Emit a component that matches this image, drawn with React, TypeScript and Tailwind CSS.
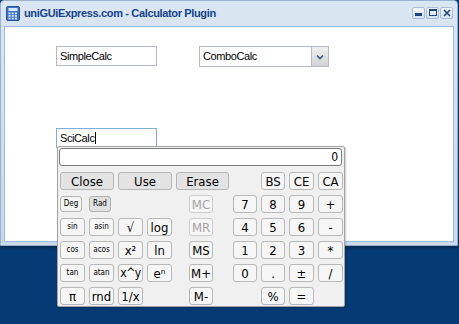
import React from "react";

interface CalcKey {
  label: string;
  cls: string;
  kind?: "wide" | "small" | "off" | "toggle" | "toggleOn" | "tight";
}

const keys: CalcKey[] = [
  { label: "Close", cls: "col-start-1 col-span-2 row-start-1", kind: "wide" },
  { label: "Use", cls: "col-start-3 col-span-2 row-start-1", kind: "wide" },
  { label: "Erase", cls: "col-start-5 col-span-3 row-start-1", kind: "wide" },
  { label: "BS", cls: "col-start-9 row-start-1" },
  { label: "CE", cls: "col-start-10 row-start-1" },
  { label: "CA", cls: "col-start-11 row-start-1" },

  { label: "Deg", cls: "col-start-1 row-start-2", kind: "toggle" },
  { label: "Rad", cls: "col-start-2 row-start-2", kind: "toggleOn" },
  { label: "MC", cls: "col-start-6 row-start-2", kind: "off" },
  { label: "7", cls: "col-start-8 row-start-2" },
  { label: "8", cls: "col-start-9 row-start-2" },
  { label: "9", cls: "col-start-10 row-start-2" },
  { label: "+", cls: "col-start-11 row-start-2" },

  { label: "sin", cls: "col-start-1 row-start-3", kind: "small" },
  { label: "asin", cls: "col-start-2 row-start-3", kind: "small" },
  { label: "√", cls: "col-start-3 row-start-3" },
  { label: "log", cls: "col-start-4 row-start-3" },
  { label: "MR", cls: "col-start-6 row-start-3", kind: "off" },
  { label: "4", cls: "col-start-8 row-start-3" },
  { label: "5", cls: "col-start-9 row-start-3" },
  { label: "6", cls: "col-start-10 row-start-3" },
  { label: "-", cls: "col-start-11 row-start-3" },

  { label: "cos", cls: "col-start-1 row-start-4", kind: "small" },
  { label: "acos", cls: "col-start-2 row-start-4", kind: "small" },
  { label: "x²", cls: "col-start-3 row-start-4" },
  { label: "ln", cls: "col-start-4 row-start-4" },
  { label: "MS", cls: "col-start-6 row-start-4" },
  { label: "1", cls: "col-start-8 row-start-4" },
  { label: "2", cls: "col-start-9 row-start-4" },
  { label: "3", cls: "col-start-10 row-start-4" },
  { label: "*", cls: "col-start-11 row-start-4" },

  { label: "tan", cls: "col-start-1 row-start-5", kind: "small" },
  { label: "atan", cls: "col-start-2 row-start-5", kind: "small" },
  { label: "x^y", cls: "col-start-3 row-start-5", kind: "tight" },
  { label: "eⁿ", cls: "col-start-4 row-start-5" },
  { label: "M+", cls: "col-start-6 row-start-5" },
  { label: "0", cls: "col-start-8 row-start-5" },
  { label: ".", cls: "col-start-9 row-start-5" },
  { label: "±", cls: "col-start-10 row-start-5" },
  { label: "/", cls: "col-start-11 row-start-5" },

  { label: "π", cls: "col-start-1 row-start-6" },
  { label: "rnd", cls: "col-start-2 row-start-6" },
  { label: "1/x", cls: "col-start-3 row-start-6" },
  { label: "M-", cls: "col-start-6 row-start-6" },
  { label: "%", cls: "col-start-9 row-start-6" },
  { label: "=", cls: "col-start-10 row-start-6" },
];

function keyStyle(kind?: CalcKey["kind"]) {
  switch (kind) {
    case "wide":
      return "bg-[#e3e3e3] border-[#b6b6b6] text-[13px] text-black";
    case "small":
      return "bg-[#f6f6f6] border-[#b8b8b8] text-[8px] text-black";
    case "off":
      return "bg-[#f6f6f6] border-[#cdcdcd] text-[13px] text-[#a3a3a3]";
    case "toggle":
      return "bg-[#f4f4f4] border-[#b8b8b8] text-[8px] text-black w-[22px] h-[16px] self-center";
    case "toggleOn":
      return "bg-[#e0e0e0] border-[#b0b0b0] text-[8px] text-black w-[22px] h-[16px] self-center";
    case "tight":
      return "bg-[#f6f6f6] border-[#b8b8b8] text-[12px] tracking-[-0.5px] text-black";
    default:
      return "bg-[#f6f6f6] border-[#b8b8b8] text-[13px] text-black";
  }
}

function CalcIcon() {
  return (
    <svg width="14" height="15" viewBox="0 0 14 15">
      <rect x="0.5" y="0.5" width="13" height="14" rx="1.5" fill="#3b73c4" stroke="#24539a" />
      <rect x="2.5" y="2" width="9" height="3" fill="#dce9fa" />
      {[0, 1, 2].map((r) =>
        [0, 1, 2].map((c) => (
          <rect key={`${r}-${c}`} x={2.5 + c * 3.2} y={6.5 + r * 2.6} width="2" height="1.7" fill="#e8f1fc" />
        ))
      )}
    </svg>
  );
}

function ToolButton({ children }: { children: React.ReactNode }) {
  return (
    <div className="w-[13px] h-[12px] flex items-center justify-center rounded-[2px] border border-[#a9bfd9] bg-gradient-to-b from-[#f2f6fb] to-[#d5e1ef]">
      {children}
    </div>
  );
}

export default function App() {
  return (
    <div
      className="relative w-[459px] h-[324px] bg-[#053a75] overflow-hidden"
      style={{ fontFamily: "Tahoma, 'DejaVu Sans', sans-serif" }}
    >
      {/* window */}
      <div className="w-[458px] h-[246px] flex flex-col bg-gradient-to-b from-[#dbe6f3] to-[#cad8e9] border border-[#99b1cf] rounded-t-[4px] px-[3px] pb-[3px] shadow-[0_2px_3px_rgba(0,0,0,0.35)]">
        <div className="h-[25px] flex items-center pl-[2px] pr-[1px] shrink-0">
          <CalcIcon />
          <span
            className="ml-[4px] text-[11px] font-bold text-[#15428b] tracking-[-0.35px]"
            style={{ fontFamily: "'Liberation Sans', Arial, sans-serif" }}
          >
            uniGUiExpress.com - Calculator Plugin
          </span>
          <div className="ml-auto flex gap-[1px] -mt-[2px]">
            <ToolButton>
              <div className="w-[7px] h-[3px] bg-[#1d4680] mt-[4px]" />
            </ToolButton>
            <ToolButton>
              <div className="w-[8px] h-[7px] border-[1.5px] border-t-[2.5px] border-[#1d4680]" />
            </ToolButton>
            <ToolButton>
              <svg width="8" height="8" viewBox="0 0 8 8">
                <path d="M1 1L7 7M7 1L1 7" stroke="#1d4680" strokeWidth="1.6" />
              </svg>
            </ToolButton>
          </div>
        </div>
        <div
          className="flex-1 bg-white border border-[#99bbe8] pl-[51px] pt-[19px] flex flex-col tracking-[-0.4px]"
          style={{ fontFamily: "'Liberation Sans', Arial, sans-serif" }}
        >
          <div className="flex items-start">
            <div className="w-[101px] h-[20px] border border-[#b5b8c8] flex items-center pl-[3px] text-[11px] text-black">
              SimpleCalc
            </div>
            <div className="ml-[42px] w-[130px] h-[21px] border border-[#b5b8c8] flex text-[11px] text-black">
              <div className="flex-1 flex items-center pl-[3px]">ComboCalc</div>
              <div className="w-[17px] border-l border-[#b5b8c8] bg-gradient-to-b from-[#f0f0f0] to-[#d4d4d4] flex items-center justify-center">
                <svg width="8" height="6" viewBox="0 0 8 6">
                  <path d="M1 1.5L4 4.5L7 1.5" stroke="#3a5a88" strokeWidth="1.6" fill="none" />
                </svg>
              </div>
            </div>
          </div>
          <div className="mt-[61px] w-[101px] h-[20px] border border-[#7eadd9] flex items-center pl-[3px] text-[11px] text-black">
            SciCalc<span className="w-px h-[12px] bg-black" />
          </div>
        </div>
      </div>

      {/* calculator popup */}
      <div className="absolute left-[57px] top-[146px] w-[288px] h-[161px] bg-[#f0f0f0] border border-[#a3a3a3] rounded-[2px] p-[1px] shadow-[1px_1px_2px_rgba(0,0,0,0.2)]">
        <div
          className="h-[18px] mr-[1px] bg-white border border-[#7c7c7c] rounded-[3px] flex items-center justify-end pr-[3px] text-[12px] text-black"
          style={{ fontFamily: "'DejaVu Sans Condensed', 'DejaVu Sans', sans-serif" }}
        >
          0
        </div>
        <div
          className="mt-[6px] ml-[1px] grid grid-cols-[25px_25px_25px_25px_9px_24px_12px_24px_24px_25px_25px] auto-rows-[18px] gap-x-[4px] gap-y-[5px]"
          style={{ fontFamily: "'DejaVu Sans Condensed', 'DejaVu Sans', sans-serif" }}
        >
          {keys.map((k) => (
            <div
              key={k.label}
              className={`${k.cls} ${keyStyle(k.kind)} border rounded-[3px] flex items-center justify-center leading-none`}
            >
              {k.label}
            </div>
          ))}
        </div>
      </div>
    </div>
  );
}
